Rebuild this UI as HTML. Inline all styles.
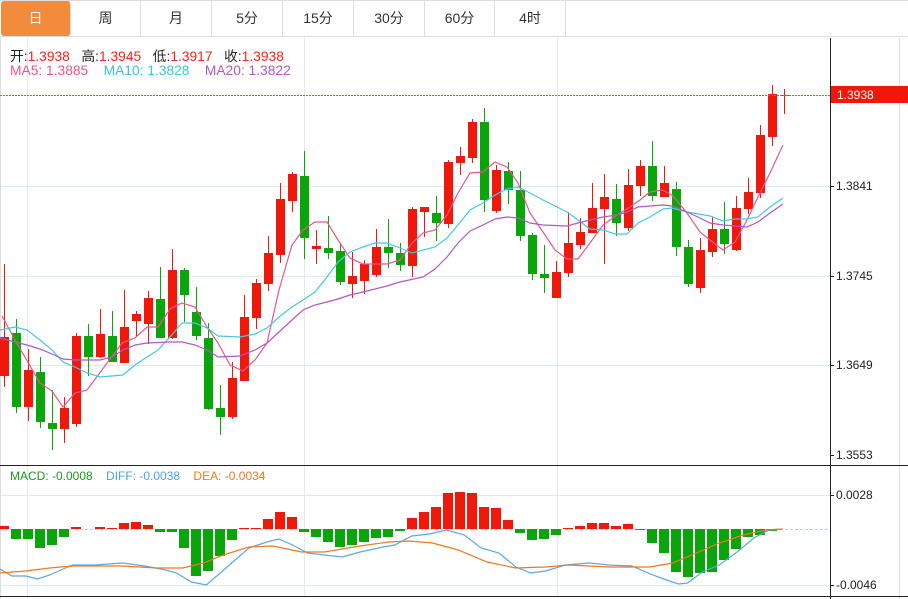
<!DOCTYPE html>
<html><head><meta charset="utf-8">
<style>
html,body{margin:0;padding:0;background:#fff;width:908px;height:599px;overflow:hidden;font-family:"Liberation Sans","Noto Sans CJK SC",sans-serif;}
.tabs{position:absolute;left:0;top:0;width:908px;height:37px;border-top:1px solid #ddd;border-bottom:1px solid #ddd;box-sizing:border-box;}
.tab{position:absolute;top:0;height:35px;line-height:35px;text-align:center;font-size:14px;color:#333;border-right:1px solid #ddd;box-sizing:border-box;}
.tab.on{background:#f28c3c;color:#fff;border-radius:3px;}
.hd{position:absolute;left:10px;font-size:13.8px;white-space:nowrap;}
svg{position:absolute;left:0;top:0;}
</style></head><body>
<div class="tabs">
<div class="tab on" style="left:1px;width:70px;">日</div>
<div class="tab" style="left:71px;width:70px;">周</div>
<div class="tab" style="left:141px;width:71px;">月</div>
<div class="tab" style="left:212px;width:71px;">5分</div>
<div class="tab" style="left:283px;width:71px;">15分</div>
<div class="tab" style="left:354px;width:71px;">30分</div>
<div class="tab" style="left:425px;width:70px;">60分</div>
<div class="tab" style="left:495px;width:71px;">4时</div>
</div>
<svg id="s" width="908" height="599" xmlns="http://www.w3.org/2000/svg"></svg>
<div class="hd" style="top:45px;color:#222;">开:<span style="color:#f0261a">1.3938</span>&nbsp;&nbsp; 高:<span style="color:#f0261a">1.3945</span>&nbsp;&nbsp; 低:<span style="color:#f0261a">1.3917</span>&nbsp;&nbsp; 收:<span style="color:#f0261a">1.3938</span></div>
<div class="hd" style="top:63px;"><span style="color:#e8578a">MA5: 1.3885</span>&nbsp;&nbsp;&nbsp; <span style="color:#3cc3dc">MA10: 1.3828</span>&nbsp;&nbsp;&nbsp; <span style="color:#b357c8">MA20: 1.3822</span></div>
<div class="hd" style="top:469px;font-size:12px;"><span style="color:#1a9a1a">MACD: -0.0008</span>&nbsp;&nbsp;&nbsp; <span style="color:#4aa3e8">DIFF: -0.0038</span>&nbsp;&nbsp;&nbsp; <span style="color:#f07820">DEA: -0.0034</span></div>
<script>
var S=document.getElementById('s'),h='';
function L(x1,y1,x2,y2,c,w,d){h+='<line x1="'+x1+'" y1="'+y1+'" x2="'+x2+'" y2="'+y2+'" stroke="'+c+'" stroke-width="'+(w||1)+'"'+(d?' stroke-dasharray="'+d+'"':'')+'/>';}
function T(x,y,t,c){h+='<text x="'+x+'" y="'+y+'" font-size="12" fill="'+(c||'#222')+'" font-family="Liberation Sans, sans-serif">'+t+'</text>';}
var G='#dfe9f0';
[186,276,365].forEach(function(y){L(0,y+.5,830,y+.5,G);});
[495,585].forEach(function(y){L(0,y+.5,830,y+.5,G);});
[27,304,557].forEach(function(x){L(x+.5,38,x+.5,596,G);});
L(0.5,38,0.5,599,'#ddd');L(899.5,38,899.5,599,'#ddd');
var R='#f0180a',Gr='#0aa50a';
var C=[[337,376,264,387,1],[333,407,319,413,0],[370,407,349,421,1],[372,422,357,428,0],[423,429,390,450,0],[408,429,397,443,1],[336,424,333,427,1],[336,357,324,376,0],[334,357,309,358,1],[336,362,311,362,0],[327,363,290,363,1],[314,321,311,337,1],[298,324,291,344,1],[299,338,267,338,0],[270,338,249,339,1],[270,295,268,322,0],[312,336,287,340,0],[338,409,323,410,0],[408,417,385,435,0],[378,417,362,419,1],[317,381,295,381,1],[283,318,279,329,1],[253,284,236,291,1],[199,255,183,263,1],[174,201,172,212,1],[176,238,151,259,0],[246,249,230,264,1],[248,253,216,259,0],[251,282,244,285,0],[276,284,252,298,1],[264,281,260,294,1],[247,275,229,277,1],[247,253,219,268,0],[253,265,243,271,0],[209,266,207,277,1],[207,212,207,237,1],[213,223,196,241,0],[162,224,160,228,1],[156,163,147,175,1],[122,158,119,163,1],[122,200,108,212,0],[170,211,165,213,1],[171,190,162,204,0],[190,236,171,241,0],[235,274,233,280,0],[274,278,245,293,0],[272,298,261,298,1],[243,273,212,277,1],[232,245,218,249,1],[208,233,183,233,1],[197,209,174,264,1],[199,223,184,236,0],[185,228,169,231,1],[166,186,160,196,1],[166,196,141,201,0],[183,197,166,197,1],[189,247,182,256,0],[247,284,240,287,0],[250,288,238,293,1],[229,252,217,257,1],[229,244,202,254,0],[208,250,196,251,1],[192,209,178,214,1],[135,193,125,198,1],[94,137,85,146,1],[95,96,89,114,1]];
C.forEach(function(c,i){var x=4+12*i,col=c[4]?R:Gr;L(x+.5,c[2],x+.5,c[3],col,1);
 h+='<rect x="'+(x-4)+'" y="'+c[0]+'" width="9" height="'+Math.max(1,c[1]-c[0])+'" fill="'+col+'"/>';});
function P(pts,c){h+='<polyline fill="none" stroke="'+c+'" stroke-width="1.2" points="'+pts.map(function(p){return p[0]+','+p[1]}).join(' ')+'"/>';}
P([[2,316],[15,340],[40,383],[52,391],[63,407],[75,393],[87,390],[122,343],[135,338],[147,327],[158,327],[170,309],[182,303],[195,307],[207,327],[218,343],[230,365],[243,371],[255,360],[267,343],[279,290],[292,245],[303,230],[315,222],[327,222],[338,240],[350,258],[363,264],[387,264],[400,260],[412,243],[423,233],[435,230],[447,215],[458,193],[470,173],[483,172],[495,162],[507,167],[518,183],[530,213],[543,232],[555,250],[567,259],[578,259],[590,243],[603,225],[617,215],[630,207],[640,200],[650,192],[662,190],[672,195],[687,213],[700,232],[710,240],[723,250],[735,242],[747,220],[758,197],[770,173],[783,145]],'#e8578a');
P([[0,330],[15,327],[27,330],[40,340],[52,350],[63,362],[75,367],[87,373],[100,377],[123,375],[135,365],[147,357],[158,350],[170,337],[182,323],[195,323],[207,328],[218,336],[240,337],[255,334],[267,328],[279,317],[292,307],[303,300],[315,292],[327,277],[338,262],[350,252],[363,247],[375,243],[387,243],[400,248],[412,253],[435,247],[447,238],[458,225],[470,210],[483,203],[495,195],[507,189],[518,187],[530,193],[543,200],[555,206],[567,212],[578,220],[590,229],[603,230],[615,234],[627,234],[638,223],[650,217],[663,209],[672,208],[687,212],[710,216],[723,221],[735,219],[747,219],[758,217],[770,207],[783,198]],'#45c8e0');
P([[0,338],[15,342],[27,345],[40,349],[52,354],[63,359],[75,360],[100,360],[112,357],[123,350],[135,345],[147,343],[170,342],[182,342],[195,345],[207,350],[218,357],[240,356],[255,350],[267,343],[279,332],[292,320],[303,310],[315,305],[327,302],[338,299],[350,295],[363,292],[387,286],[400,282],[423,277],[435,269],[447,257],[458,243],[470,231],[483,225],[495,219],[507,217],[518,218],[530,223],[543,225],[567,226],[578,223],[590,220],[603,217],[617,215],[627,212],[638,207],[650,206],[663,205],[672,206],[687,212],[700,218],[710,223],[723,225],[747,227],[758,222],[770,213],[783,204]],'#b357c8');
h+='<rect x="0" y="95" width="830" height="1" fill="none"/>';
for(var xx=0;xx<830;xx+=3){h+='<rect x="'+xx+'" y="95" width="2" height="1" fill="#f25050"/>';}
L(0,529.5,830,529.5,'#9fdde8',1,'3,2');
var M=[526,539,539,548,545,537,527,529,527,528,523,522,525,532,532,548,576,571,556,540,528,528,519,512,517,532,537,542,547,545,542,538,537,531,518,512,507,493,492,493,507,508,520,533,540,539,535,528,526,523,523,526,524,530,543,553,572,577,573,572,560,549,537,535,531,529];
M.forEach(function(y,i){var x=4+12*i,up=y<529;var top=up?y:529,ht=Math.abs(529-y);if(ht<1)return;
 h+='<rect x="'+(x-5)+'" y="'+top+'" width="10" height="'+ht+'" fill="'+(up?R:Gr)+'"/>';});
function Q(pts,c){P(pts.map(function(p){return [p[0]*0.992,p[1]]}),c);}
Q([[0,569],[12,576],[26,576],[38,579],[50,575],[73,565],[96,565],[123,563],[146,566],[167,570],[178,573],[193,582],[208,585],[222,573],[237,560],[251,548],[269,542],[281,539],[295,545],[310,553],[327,555],[345,557],[363,552],[386,547],[398,545],[415,536],[433,534],[450,530],[468,535],[485,548],[503,553],[520,567],[535,573],[550,571],[570,565],[594,563],[614,565],[637,566],[658,575],[672,580],[684,584],[693,583],[708,572],[725,565],[743,552],[760,538],[775,530],[789,529]],'#5aa8e8');
Q([[0,573],[26,571],[50,568],[73,566],[123,566],[158,568],[184,568],[205,563],[225,555],[251,547],[275,546],[304,552],[327,552],[363,546],[392,542],[412,541],[436,543],[462,550],[491,562],[520,568],[550,567],[573,565],[614,567],[655,567],[678,563],[702,553],[725,543],[749,535],[772,530],[789,529]],'#f07820');
L(0,465.5,908,465.5,'#222');L(0,596.5,908,596.5,'#222');
L(830.5,38,830.5,599,'#222');
[[186,'1.3841'],[276,'1.3745'],[365,'1.3649'],[455,'1.3553'],[495,'0.0028'],[585,'-0.0046']].forEach(function(a){L(830,a[0]+.5,834,a[0]+.5,'#222');T(836,a[0]+4,a[1]);});
h+='<rect x="831" y="86" width="77" height="17" fill="#f0180a"/>';
T(837,99,'1.3938','#fff');
S.innerHTML=h;
</script>
</body></html>
